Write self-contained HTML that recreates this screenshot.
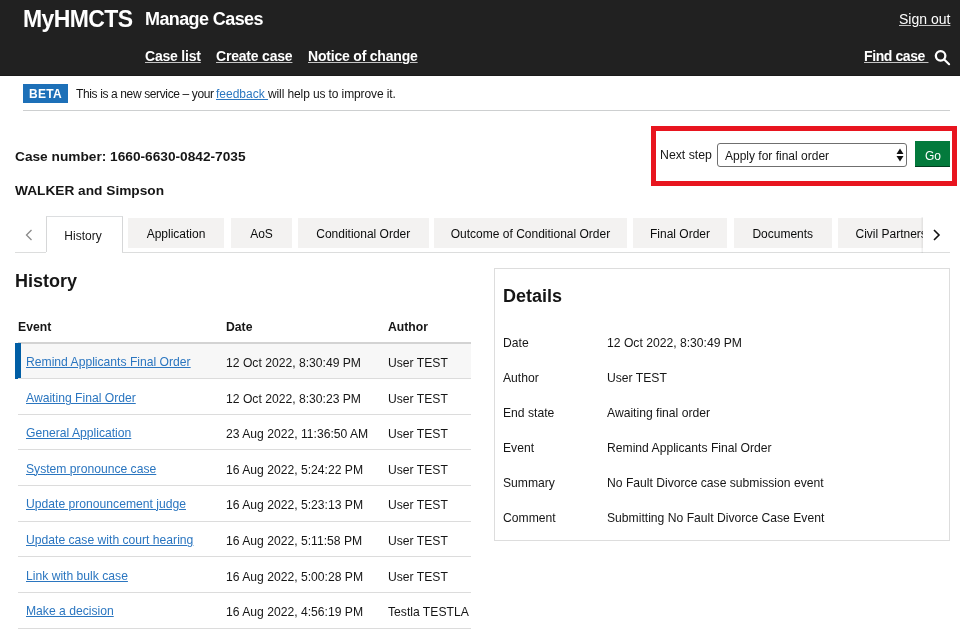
<!DOCTYPE html>
<html><head><meta charset="utf-8">
<style>
*{margin:0;padding:0;box-sizing:border-box}
html,body{width:960px;height:640px;overflow:hidden;background:#fff}
body{position:relative;font-family:"Liberation Sans",sans-serif;color:#161616}
.a{position:absolute;white-space:nowrap;line-height:1;will-change:transform}
.hdr{position:absolute;left:0;top:0;width:960px;height:75.6px;background:#212121;border-bottom:1.8px solid #1a1a1a}
.w{color:#fff}
.b{font-weight:bold}
.u{text-decoration:underline;text-underline-offset:1px;text-decoration-thickness:1.2px;text-decoration-color:#c4c4c4}
.lnk{color:#2b76c0;text-decoration:underline;text-underline-offset:1px;text-decoration-thickness:1px}
.tab{will-change:transform;position:absolute;top:218px;height:30.3px;background:#f3f2f1;font-size:12px;line-height:32.4px;text-align:center;color:#0b0c0c;overflow:hidden;white-space:nowrap}
.rowline{position:absolute;left:18px;width:453px;height:1px;background:#dcdcdc}
</style></head>
<body>
<div class="hdr"></div>
<div class="a w b" style="left:23px;top:7.5px;font-size:23px;letter-spacing:-0.6px">MyHMCTS</div>
<div class="a w b" style="left:145px;top:10px;font-size:18px;letter-spacing:-0.6px">Manage Cases</div>
<div class="a w b u" style="left:144.5px;top:49px;font-size:14px;letter-spacing:-0.2px">Case list</div>
<div class="a w b u" style="left:215.5px;top:49px;font-size:14px;letter-spacing:-0.2px">Create case</div>
<div class="a w b u" style="left:308px;top:49px;font-size:14px;letter-spacing:-0.2px">Notice of change</div>
<div class="a w u" style="left:898.5px;top:12px;font-size:14px">Sign out</div>
<div class="a w b u" style="left:863.5px;top:49px;font-size:14px;letter-spacing:-0.4px">Find case&nbsp;</div>
<svg class="a" style="left:933px;top:48px" width="20" height="20" viewBox="0 0 20 20"><circle cx="7.6" cy="7.8" r="4.75" fill="none" stroke="#fff" stroke-width="2.3"/><line x1="11.2" y1="11.4" x2="16.1" y2="16.2" stroke="#fff" stroke-width="2.1" stroke-linecap="round"/></svg>

<div class="a" style="left:23px;top:83.5px;width:45px;height:19px;background:#1d70b8"></div>
<div class="a w b" style="left:28.6px;top:87.8px;font-size:12px;letter-spacing:0.3px">BETA</div>
<div class="a" style="left:75.5px;top:87.5px;font-size:12px;letter-spacing:-0.37px">This is a new service – your</div>
<div class="a" style="left:215.5px;top:87.5px;font-size:12px"><span class="lnk" style="text-underline-offset:1px">feedback&nbsp;</span></div>
<div class="a" style="left:267.5px;top:87.5px;font-size:12px;letter-spacing:-0.11px">will help us to improve it.</div>
<div class="a" style="left:23px;top:110px;width:927px;height:1px;background:#cdcfd0"></div>

<div class="a b" style="left:15px;top:149.5px;font-size:13.7px">Case number: 1660-6630-0842-7035</div>
<div class="a b" style="left:15px;top:183.9px;font-size:13.7px">WALKER and Simpson</div>

<div class="a" style="left:651px;top:126px;width:306px;height:60px;border:5px solid #e8151f"></div>
<div class="a" style="left:660px;top:149.4px;font-size:12.3px">Next step</div>
<div class="a" style="left:717px;top:143.3px;width:190px;height:23.6px;border:1.2px solid #6f6f6f;border-radius:3px;background:#fff"></div>
<div class="a" style="left:724.7px;top:149.8px;font-size:12px">Apply for final order</div>
<svg class="a" style="left:896px;top:148px" width="8" height="14" viewBox="0 0 8 14"><path d="M4 0.5 L7.5 6 L0.5 6 Z M0.5 8 L7.5 8 L4 13.5 Z" fill="#111"/></svg>
<div class="a" style="left:914.6px;top:141.4px;width:35.3px;height:26.1px;background:#037a3c;border-bottom:1.5px solid #003d1f"></div>
<div class="a w" style="left:924.5px;top:149.8px;font-size:12px">Go</div>

<!-- tabs -->
<div class="a" style="left:15px;top:252px;width:31px;height:1px;background:#dcdddd"></div><div class="a" style="left:122px;top:252px;width:828px;height:1px;background:#dcdddd"></div>
<svg class="a" style="left:22.6px;top:227.5px" width="12" height="14" viewBox="0 0 12 14"><path d="M8.5 2 L3.5 7 L8.5 12" fill="none" stroke="#8a8a8a" stroke-width="1.3"/></svg>
<div class="a" style="left:45.5px;top:216.4px;width:77px;height:36.2px;background:#fff;border:1px solid #d6d7d8;border-top:1.5px solid #dcdee0;border-bottom:none;font-size:12px;line-height:38.4px;text-align:center;text-indent:-3px">History</div>
<div class="tab" style="left:128px;width:96px">Application</div>
<div class="tab" style="left:230.5px;width:61px">AoS</div>
<div class="tab" style="left:297.5px;width:130.5px">Conditional Order</div>
<div class="tab" style="left:434px;width:193px">Outcome of Conditional Order</div>
<div class="tab" style="left:633px;width:94px">Final Order</div>
<div class="tab" style="left:733.5px;width:97.5px">Documents</div>
<div class="tab" style="left:838px;width:100px;text-align:left;padding-left:17.5px">Civil Partnership</div>
<div class="a" style="left:922.5px;top:210px;width:37.5px;height:42px;background:#fff"></div>
<div class="a" style="left:920.5px;top:216.5px;width:2px;height:35.5px;background:linear-gradient(to right,rgba(0,0,0,0.02),rgba(0,0,0,0.07))"></div>
<svg class="a" style="left:930.3px;top:227.7px" width="12" height="14" viewBox="0 0 12 14"><path d="M4 2 L9 7 L4 12" fill="none" stroke="#111" stroke-width="1.6"/></svg>

<!-- history -->
<div class="a b" style="left:15.3px;top:271.6px;font-size:18px">History</div>
<div class="a b" style="left:17.6px;top:320.5px;font-size:12.2px">Event</div>
<div class="a b" style="left:225.6px;top:320.5px;font-size:12.2px">Date</div>
<div class="a b" style="left:387.6px;top:320.5px;font-size:12.2px">Author</div>
<div class="a" style="left:18px;top:342.2px;width:453px;height:1.7px;background:#d3d3d3"></div>
<div class="a" style="left:18px;top:344px;width:453px;height:34.5px;background:#f7f7f7"></div>
<div class="a" style="left:15.2px;top:342.5px;width:6px;height:35.8px;background:#005ea5"></div>
<div class="a lnk" style="left:25.6px;top:356.07px;font-size:12.15px">Remind Applicants Final Order</div>
<div class="a" style="left:225.6px;top:356.97px;font-size:12.15px">12 Oct 2022, 8:30:49 PM</div>
<div class="a" style="left:387.6px;top:356.97px;font-size:12.15px">User TEST</div>
<div class="rowline" style="top:377.8px"></div>
<div class="a lnk" style="left:25.6px;top:391.67px;font-size:12.15px">Awaiting Final Order</div>
<div class="a" style="left:225.6px;top:392.57px;font-size:12.15px">12 Oct 2022, 8:30:23 PM</div>
<div class="a" style="left:387.6px;top:392.57px;font-size:12.15px">User TEST</div>
<div class="rowline" style="top:413.5px"></div>
<div class="a lnk" style="left:25.6px;top:427.27px;font-size:12.15px">General Application</div>
<div class="a" style="left:225.6px;top:428.17px;font-size:12.15px">23 Aug 2022, 11:36:50 AM</div>
<div class="a" style="left:387.6px;top:428.17px;font-size:12.15px">User TEST</div>
<div class="rowline" style="top:449.2px"></div>
<div class="a lnk" style="left:25.6px;top:462.87px;font-size:12.15px">System pronounce case</div>
<div class="a" style="left:225.6px;top:463.77px;font-size:12.15px">16 Aug 2022, 5:24:22 PM</div>
<div class="a" style="left:387.6px;top:463.77px;font-size:12.15px">User TEST</div>
<div class="rowline" style="top:484.9px"></div>
<div class="a lnk" style="left:25.6px;top:498.47px;font-size:12.15px">Update pronouncement judge</div>
<div class="a" style="left:225.6px;top:499.37px;font-size:12.15px">16 Aug 2022, 5:23:13 PM</div>
<div class="a" style="left:387.6px;top:499.37px;font-size:12.15px">User TEST</div>
<div class="rowline" style="top:520.6px"></div>
<div class="a lnk" style="left:25.6px;top:534.07px;font-size:12.15px">Update case with court hearing</div>
<div class="a" style="left:225.6px;top:534.97px;font-size:12.15px">16 Aug 2022, 5:11:58 PM</div>
<div class="a" style="left:387.6px;top:534.97px;font-size:12.15px">User TEST</div>
<div class="rowline" style="top:556.3px"></div>
<div class="a lnk" style="left:25.6px;top:569.67px;font-size:12.15px">Link with bulk case</div>
<div class="a" style="left:225.6px;top:570.57px;font-size:12.15px">16 Aug 2022, 5:00:28 PM</div>
<div class="a" style="left:387.6px;top:570.57px;font-size:12.15px">User TEST</div>
<div class="rowline" style="top:592.0px"></div>
<div class="a lnk" style="left:25.6px;top:605.27px;font-size:12.15px">Make a decision</div>
<div class="a" style="left:225.6px;top:606.17px;font-size:12.15px">16 Aug 2022, 4:56:19 PM</div>
<div class="a" style="left:387.6px;top:606.17px;font-size:12.15px">Testla TESTLA</div>
<div class="rowline" style="top:627.7px"></div>
<div class="a" style="left:494px;top:267.7px;width:456px;height:273px;border:1px solid #dddddd"></div>
<div class="a b" style="left:503px;top:287.1px;font-size:18px">Details</div>
<div class="a" style="left:502.7px;top:336.72px;font-size:12.15px">Date</div>
<div class="a" style="left:606.9px;top:336.72px;font-size:12.15px">12 Oct 2022, 8:30:49 PM</div>
<div class="a" style="left:502.7px;top:371.68px;font-size:12.15px">Author</div>
<div class="a" style="left:606.9px;top:371.68px;font-size:12.15px">User TEST</div>
<div class="a" style="left:502.7px;top:406.64px;font-size:12.15px">End state</div>
<div class="a" style="left:606.9px;top:406.64px;font-size:12.15px">Awaiting final order</div>
<div class="a" style="left:502.7px;top:441.6px;font-size:12.15px">Event</div>
<div class="a" style="left:606.9px;top:441.6px;font-size:12.15px">Remind Applicants Final Order</div>
<div class="a" style="left:502.7px;top:476.56px;font-size:12.15px">Summary</div>
<div class="a" style="left:606.9px;top:476.56px;font-size:12.15px">No Fault Divorce case submission event</div>
<div class="a" style="left:502.7px;top:511.52px;font-size:12.15px">Comment</div>
<div class="a" style="left:606.9px;top:511.52px;font-size:12.15px">Submitting No Fault Divorce Case Event</div>
</body></html>
